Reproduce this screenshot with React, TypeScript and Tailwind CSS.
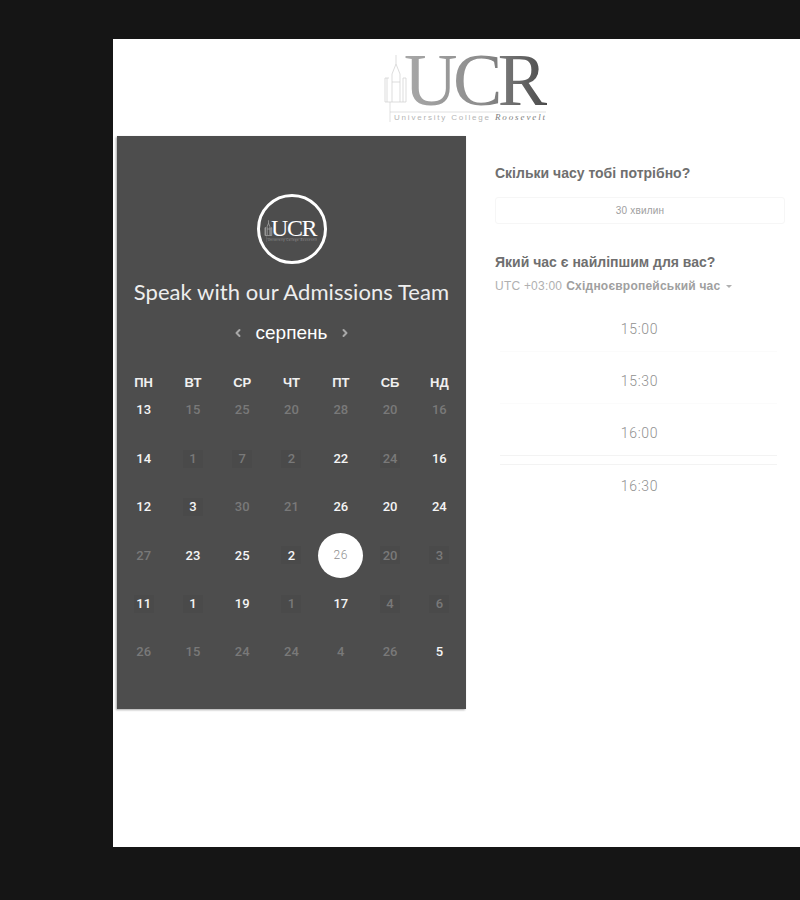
import { ChevronLeft, ChevronRight } from 'lucide-react';

type Day = { n: number; on?: boolean; box?: boolean; selected?: boolean };

const WEEKDAYS = ['ПН', 'ВТ', 'СР', 'ЧТ', 'ПТ', 'СБ', 'НД'];

const DAYS: Day[] = [
  { n: 13, on: true }, { n: 15 }, { n: 25 }, { n: 20 }, { n: 28 }, { n: 20 }, { n: 16 },
  { n: 14, on: true }, { n: 1, box: true }, { n: 7, box: true }, { n: 2, box: true }, { n: 22, on: true }, { n: 24, box: true }, { n: 16, on: true },
  { n: 12, on: true }, { n: 3, on: true, box: true }, { n: 30 }, { n: 21 }, { n: 26, on: true }, { n: 20, on: true }, { n: 24, on: true },
  { n: 27 }, { n: 23, on: true }, { n: 25, on: true }, { n: 2, on: true, box: true }, { n: 26, selected: true }, { n: 20, box: true }, { n: 3, box: true },
  { n: 11, on: true, box: true }, { n: 1, on: true, box: true }, { n: 19, on: true }, { n: 1, box: true }, { n: 17, on: true }, { n: 4, box: true }, { n: 6, box: true },
  { n: 26 }, { n: 15 }, { n: 24 }, { n: 24 }, { n: 4 }, { n: 26 }, { n: 5, on: true },
];

const TIMES = [
  { t: '15:00', cls: 'border-b border-b-[#fbfbfb]' },
  { t: '15:30', cls: 'border-b border-b-[#fbfbfb]' },
  { t: '16:00', cls: 'border-b border-b-[#f3f3f3]' },
  { t: '16:30', cls: 'border-t border-t-[#f3f3f3] pb-[1px]' },
];

function Logo({ light, className }: { light?: boolean; className?: string }) {
  const line = light ? '#b5b5b5' : '#cfcfcf';
  const grad = light ? 'ucrL' : 'ucrD';
  return (
    <svg viewBox="0 -11 170 86" className={className}>
      <defs>
        <linearGradient id={grad} x1="0" x2="1" y1="0" y2="0">
          <stop offset="0" stopColor={light ? '#ffffff' : '#a8a8a8'} />
          <stop offset="0.55" stopColor={light ? '#ffffff' : '#8c8c8c'} />
          <stop offset="1" stopColor={light ? '#ffffff' : '#4a4a4a'} />
        </linearGradient>
      </defs>
      {/* tower */}
      <g fill="none" stroke={line} strokeWidth={light ? 2 : 0.7}>
        <path d="M14 5 L14 14 M10 24 L14 14 L18 24 M10 24 L10 52 M18 24 L18 52 M10 32 L18 32 M10 52 L18 52" />
        <path d="M5 28 L5 52 L10 52 M3 28 L7 28 M3 28 L3 52 L5 52 M18 52 L24 52 L24 28 M21 28 L21 52 M21 28 L24 28" />
        <path d="M8 52 L8 72 M8 62 L164 62" strokeWidth="0.6" />
      </g>
      <text
        x="22"
        y="55"
        fontFamily='"Liberation Serif", serif'
        fontSize="74"
        letterSpacing="-4.5"
        fill={`url(#${grad})`}
      >
        UCR
      </text>
      <text
        x="12"
        y="70"
        fontFamily='"Liberation Sans", sans-serif'
        fontSize="8"
        letterSpacing="1.8"
        fill={light ? '#9a9a9a' : '#b5b5b5'}
      >
        University College{' '}
        <tspan
          fontFamily='"Liberation Serif", serif'
          fontStyle="italic"
          fontSize="9"
          letterSpacing="1.9"
          fill={light ? '#9a9a9a' : '#808080'}
        >
          Roosevelt
        </tspan>
      </text>
    </svg>
  );
}

export default function App() {
  return (
    <div className="w-[800px] h-[900px] bg-[#151515] pl-[113px] pt-[39px] overflow-hidden">
      <div className="w-[687px] h-[808px] bg-white pl-[4px]">
        {/* top logo */}
        <div className="h-[97px] pl-[265px]">
          <Logo className="w-[170px] h-[86px]" />
        </div>

        <div className="flex">
          {/* calendar panel */}
          <div className="w-[349px] h-[573px] bg-[#4d4d4d] shadow-[-1px_1px_2px_rgba(0,0,0,0.35)] flex flex-col items-center pt-[58px] font-['Lato',sans-serif]">
            <div className="w-[70px] h-[70px] rounded-full border-[3px] border-white flex items-center justify-center shrink-0">
              <Logo light className="w-[55px] h-[28px]" />
            </div>

            <h1 className="mt-[13px] text-[22px] leading-[30px] tracking-[0.07px] text-[#eeeeee] font-normal">
              Speak with our Admissions Team
            </h1>

            <div className="mt-[14px] h-[24px] flex items-center text-white font-['Liberation_Sans',sans-serif]">
              <ChevronLeft className="w-[12px] h-[12px] text-[#a8a8a8]" strokeWidth={4} />
              <span className="mx-[12px] text-[19px] leading-[24px]">серпень</span>
              <ChevronRight className="w-[12px] h-[12px] text-[#a8a8a8]" strokeWidth={4} />
            </div>

            <div className="mt-[30px] w-[345px] grid grid-cols-7 font-['Liberation_Sans',sans-serif]">
              {WEEKDAYS.map(d => (
                <div key={d} className="h-[16px] flex items-center justify-center text-[13px] font-bold text-[#f0f0f0]">
                  {d}
                </div>
              ))}
            </div>

            <div className="mt-[-5px] w-[345px] grid grid-cols-7 auto-rows-[48.4px] font-['Roboto',sans-serif]">
              {DAYS.map((d, i) => (
                <div key={i} className="flex items-center justify-center">
                  {d.selected ? (
                    <span className="w-[45px] h-[45px] rounded-full bg-white flex items-center justify-center text-[12px] font-light tracking-[0.6px] text-[#8f8f8f]">
                      {d.n}
                    </span>
                  ) : (
                    <span
                      className={
                        'min-w-[20px] h-[18px] flex items-center justify-center text-[13px] font-medium ' +
                        (d.on ? 'text-[#f5f5f5] ' : 'text-[#797979] ') +
                        (d.box ? 'bg-[#4a4a4a]' : '')
                      }
                    >
                      {d.n}
                    </span>
                  )}
                </div>
              ))}
            </div>
          </div>

          {/* right column */}
          <div className="ml-[29px] w-[290px] pt-[27px] font-['Liberation_Sans',sans-serif]">
            <h2 className="text-[14px] leading-[20px] font-bold text-[#6f6f6f]">Скільки часу тобі потрібно?</h2>
            <div className="mt-[14px] h-[27px] rounded-[3px] border border-[#f6f6f6] flex items-center justify-center text-[10px] tracking-[0.2px] text-[#a0a0a0]">
              30 хвилин
            </div>

            <h2 className="mt-[28px] text-[14px] leading-[20px] font-bold text-[#6f6f6f]">Який час є найліпшим для вас?</h2>
            <div className="mt-[4px] h-[20px] flex items-center text-[12px] text-[#b0b0b0] tracking-[0.22px]">
              <span>UTC +03:00</span>
              <span className="ml-[4px] font-bold text-[#a0a0a0]">Східноєвропейський час</span>
              <span className="ml-[6px] w-0 h-0 border-x-[3px] border-x-transparent border-t-[3px] border-t-[#b0b0b0]" />
            </div>

            <div className="mt-[12px] ml-[5px] w-[277px] flex flex-col gap-[8px] font-['Roboto',sans-serif]">
              {TIMES.map(row => (
                <div key={row.t} className={'h-[44px] pl-[2px] flex items-center justify-center text-[14px] font-light tracking-[0.7px] text-[#909090] ' + row.cls}>
                  {row.t}
                </div>
              ))}
            </div>
          </div>
        </div>
      </div>
    </div>
  );
}
